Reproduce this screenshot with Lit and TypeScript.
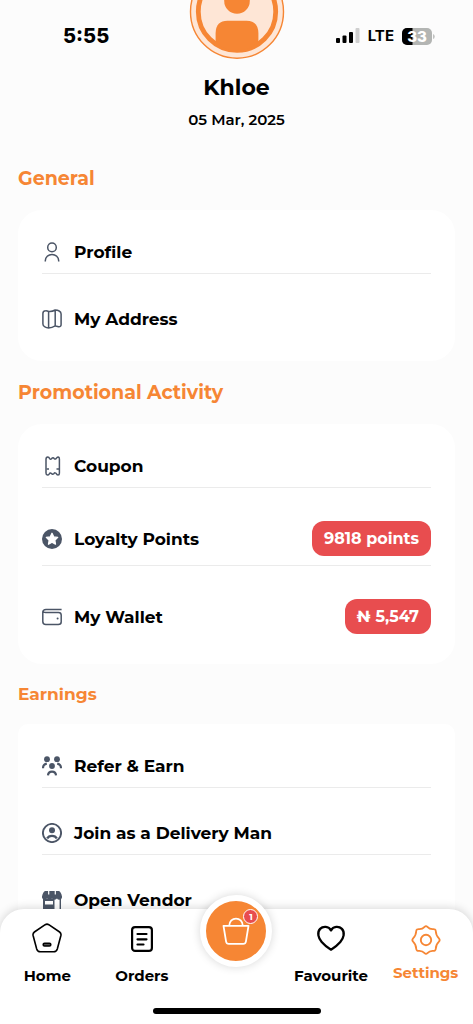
import { LitElement, html, css, svg, nothing } from "lit";
import type { TemplateResult } from "lit";
import { customElement, property } from "lit/decorators.js";
import { classMap } from "lit/directives/class-map.js";

const icon = (body: unknown, size = 20) =>
  html`<svg width=${size} height=${size} viewBox="0 0 ${size} ${size}" fill="none" aria-hidden="true">${body}</svg>`;

const rowIcons: Record<string, TemplateResult> = {
  profile: icon(svg`
    <circle cx="10" cy="5.4" r="4.3" stroke="currentColor" stroke-width="1.5"/>
    <path d="M3.3 19.6v-.9a6.7 6.3 0 0 1 13.4 0v.9" stroke="currentColor" stroke-width="1.5"/>`),
  map: icon(svg`
    <path d="M.9 4.6Q.9 1.8 3.6 1.7Q5.2 1.6 6.6 2.5Q10 2.9 13.2 1Q15.6 1 17.2 2Q19.1 2.9 19.1 5V15.4Q19.1 18 16.5 17.7Q14.5 17 13.2 16.9Q10 18.9 6.6 18.9Q4.5 18.9 2.9 17.9Q.9 17 .9 15ZM6.6 2.5V18.9M13.2 1V16.9" stroke="currentColor" stroke-width="1.5" stroke-linejoin="round"/>`),
  coupon: icon(svg`
    <path d="M4 3.2Q4 .9 5.8 .9Q7 .9 7.3 2.2Q8.3 4 9.8 2.4Q11 1.2 12.2 2.6Q13.5 3.8 14.7 1.8Q15.3 .9 16.3 .9Q17.4 1.1 17.4 3V17.2Q17.4 19.1 16 19.1Q14.8 19.1 14.4 17.8Q13 16 11.8 17.7Q10.6 18.9 9.5 17.6Q8 16.1 7.1 18.1Q6.6 19.1 5.5 19.1Q4 19 4 17Z" stroke="currentColor" stroke-width="1.5" stroke-linejoin="round"/>
    <path d="M4.5 13H7M14.5 13H17" stroke="currentColor" stroke-width="1.4"/>`),
  star: icon(svg`
    <circle cx="10" cy="10" r="10" fill="currentColor"/>
    <path d="m10 4.3 1.7 3.6 4 .5-2.9 2.8.7 4-3.5-1.9-3.5 1.9.7-4-2.9-2.8 4-.5Z" fill="#fff" stroke="#fff" stroke-width="1.3" stroke-linejoin="round"/>`),
  wallet: icon(svg`
    <path d="M19.6 2.6H4Q.8 2.6 .8 5.2V14.5Q.8 17.5 3.8 17.5H16.2Q19.2 17.5 19.2 15V8Q19.2 5.4 16.5 5.4H3.5Q1 5.4 .9 4.6" stroke="currentColor" stroke-width="1.5"/>
    <circle cx="15.6" cy="11.5" r="1" fill="currentColor"/>`),
  group: icon(svg`
    <g fill="currentColor"><circle cx="5" cy="3.2" r="2.9"/><circle cx="15" cy="3.2" r="2.9"/><circle cx="10" cy="10" r="2.9"/></g>
    <path d="M1 12.2Q1 8.3 4.8 7.7M19 12.2Q19 8.3 15.2 7.7M6 19.4Q6.2 15.6 10 15.6T14 19.4" stroke="currentColor" stroke-width="2.2"/>`),
  account: icon(svg`
    <circle cx="10" cy="10" r="9.1" stroke="currentColor" stroke-width="1.9"/>
    <circle cx="10" cy="7.2" r="3" fill="currentColor"/>
    <path d="M5.2 15.6Q6.5 12.9 10 12.9T14.8 15.6" stroke="currentColor" stroke-width="2.4"/>`),
  store: icon(svg`
    <path d="M3.2 1H16.8Q19 1.5 20 6.5V7.5Q19.5 9.8 17.5 9.8Q15.6 9.8 15 8.5Q13.5 9.8 12.3 9.8Q10.8 9.8 10 8.5Q9.2 9.8 7.7 9.8Q6.4 9.8 5 8.5Q4.2 9.8 2.4 9.8Q.4 9.5 0 7.5V6.5Q1 1.5 3.2 1Z" fill="currentColor"/>
    <path d="M6.7 1V4.5M13.3 1V4.5" stroke="#fff" stroke-width="1.2"/>
    <path d="M1 9H12.5V20H1ZM17.6 9H19V20H17.6Z" fill="currentColor"/>
    <path d="M3 11H11V14.5H3Z" fill="#fff"/>`),
};

const navIcons: Record<string, TemplateResult> = {
  home: icon(svg`
    <path d="M13.2 1.7Q15 .6 16.8 1.7L27.6 9Q29.4 10.3 28.9 12.5L25.3 25.9Q24.4 28.7 21.6 28.7H8.4Q5.6 28.7 4.7 25.9L1.1 12.5Q.6 10.3 2.4 9Z" stroke="currentColor" stroke-width="1.6"/>
    <rect x="11.2" y="20.3" width="7.6" height="2.7" rx="1.35" stroke="currentColor" stroke-width="1.6" fill="#555"/>`, 30),
  orders: icon(svg`
    <rect x="5.1" y="4.1" width="19.8" height="23.8" rx="3" stroke="currentColor" stroke-width="2.2"/>
    <path d="M10.5 11H19.5M10.5 16.3H19.5M10.5 21.5H16.5" stroke="currentColor" stroke-width="2.2" stroke-linecap="round"/>`, 30),
  heart: icon(svg`
    <path d="M15 7.4C12.8 3.1 7 2.9 4.1 5.9C.8 9.5 2.3 15.2 5.7 19C8.4 22.1 11.8 24.9 15 26.7C18.2 24.9 21.6 22.1 24.3 19C27.7 15.2 29.2 9.5 25.9 5.9C23 2.9 17.2 3.1 15 7.4Z" stroke="currentColor" stroke-width="2.3" stroke-linejoin="round"/>`, 30),
  gear: icon(svg`
    <path d="M13.6 1.9Q15 .5 16.4 1.9C18.2 3.9 19.1 4.3 21.8 4.2Q24.7 4 24.8 6.2C24.9 9.8 25.3 10.8 27.9 13.3Q29.4 15 27.9 16.7C25.3 19.2 24.9 20.2 24.8 23.8Q24.7 26 21.8 25.8C19.1 25.7 18.2 26.1 16.4 28.1Q15 29.5 13.6 28.1C11.8 26.1 10.9 25.7 8.2 25.8Q5.3 26 5.2 23.8C5.1 20.2 4.7 19.2 2.1 16.7Q.6 15 2.1 13.3C4.7 10.8 5.1 9.8 5.2 6.2Q5.3 4 8.2 4.2C10.9 4.3 11.8 3.9 13.6 1.9Z" stroke="currentColor" stroke-width="1.8"/>
    <circle cx="15" cy="15" r="5.2" stroke="currentColor" stroke-width="1.9"/>`, 30),
};

interface Row {
  icon: string;
  label: string;
  badge?: string;
}

@customElement("settings-group")
class SettingsGroup extends LitElement {
  @property() heading = "";
  @property({ attribute: false }) rows: Row[] = [];
  @property({ type: Boolean, reflect: true }) compact = false;

  static styles = css`
    :host { display: block; }
    .heading { margin: 0; padding: 20px 0; font-size: 19px; line-height: 23px; font-weight: 700; color: #f68634; }
    .card { list-style: none; margin: 0; padding: 20px 24px; background: #fff; border-radius: 24px; display: flex; flex-direction: column; gap: 23px; }
    :host([compact]) .heading { font-size: 17px; line-height: 20px; }
    :host([compact]) .card { border-radius: 10px; }
    .item { padding: 10px 0 9px; border-bottom: 1px solid #ebebeb; }
    .item:last-child { padding-bottom: 10px; border-bottom: 0; }
    .row { display: flex; align-items: center; gap: 12px; min-height: 24px; color: #000; text-decoration: none; font-size: 17px; line-height: 24px; font-weight: 700; }
    .glyph { display: flex; color: #4b5566; }
    .label { flex: 1; }
    .badge { padding: 0 12px; line-height: 35px; font-size: 16px; color: #fff; background: #e84d4f; border-radius: 12px; }
  `;

  render() {
    return html`
      <h2 class="heading">${this.heading}</h2>
      <ul class="card">
        ${this.rows.map(
          (row) => html`<li class="item">
            <a class="row" href="#">
              <span class="glyph">${rowIcons[row.icon]}</span>
              <span class="label">${row.label}</span>
              ${row.badge ? html`<span class="badge">${row.badge}</span>` : nothing}
            </a>
          </li>`
        )}
      </ul>
    `;
  }
}

@customElement("tab-bar")
class TabBar extends LitElement {
  static styles = css`
    :host { display: block; }
    .bar { background: #fff; border-radius: 24px 24px 0 0; box-shadow: 0 -1px 10px rgba(0, 0, 0, 0.16); }
    .tabs { display: grid; grid-template-columns: repeat(5, 1fr); height: 99px; padding-top: 14px; box-sizing: border-box; }
    .tab { display: flex; flex-direction: column; align-items: center; gap: 13px; color: #000; text-decoration: none; font-size: 15px; line-height: 20px; font-weight: 700; }
    .tab svg { display: block; }
    .active { color: #f68634; gap: 8px; padding-top: 2px; }
    .cart { position: relative; justify-self: center; width: 72px; height: 72px; margin-top: -28px; padding: 0; border: 6px solid #fff; border-radius: 50%; background: #f68634; box-shadow: 0 0 10px rgba(0, 0, 0, 0.16); }
    .cart svg { display: block; margin: auto; }
    .count { position: absolute; top: 8px; right: 8px; width: 15px; height: 15px; box-sizing: border-box; border: 1px solid #fff; border-radius: 50%; background: #e84d4f; color: #fff; font: 700 9px/13px Montserrat, Inter, sans-serif; text-align: center; }
    .indicator { width: 168px; height: 6px; margin: 0 auto; border-radius: 3px; background: #000; }
    .foot { padding-bottom: 10px; }
  `;

  private tab(glyph: string, label: string, active = false) {
    return html`<a class=${classMap({ tab: true, active })} href="#">${navIcons[glyph]}<span>${label}</span></a>`;
  }

  render() {
    return html`
      <div class="bar">
        <nav class="tabs">
          ${this.tab("home", "Home")} ${this.tab("orders", "Orders")}
          <button class="cart" aria-label="Cart">
            <svg width="28" height="28" viewBox="0 0 28 28" fill="none" aria-hidden="true">
              <path d="M1.5 8.8H26.5L23.9 24.6Q23.5 26.9 21.2 26.9H6.8Q4.5 26.9 4.1 24.6ZM7.2 8.8C7.3 -.9 20.7 -.9 20.8 8.8" stroke="#fff" stroke-width="1.8" stroke-linejoin="round"/>
            </svg>
            <span class="count">1</span>
          </button>
          ${this.tab("heart", "Favourite")} ${this.tab("gear", "Settings", true)}
        </nav>
        <div class="foot"><div class="indicator"></div></div>
      </div>
    `;
  }
}

@customElement("app-root")
class AppRoot extends LitElement {
  static styles = css`
    :host { display: block; position: relative; height: 100vh; overflow: hidden; background: #fcfcfc; color: #000; font-family: Montserrat, Inter, sans-serif; }
    .status { position: absolute; inset: 24px 38px auto 63px; display: flex; justify-content: space-between; align-items: center; height: 24px; font-family: Inter, sans-serif; }
    .time { font-size: 20px; line-height: 24px; font-weight: 800; }
    .signals { display: flex; align-items: center; gap: 8px; font-size: 15px; line-height: 24px; font-weight: 700; }
    .signals svg { display: block; }
    .header { display: flex; flex-direction: column; align-items: center; padding-bottom: 17px; }
    .header svg { display: block; }
    .name { margin: 15px 0 8px; font-size: 22px; line-height: 28px; font-weight: 700; }
    .date { margin: 0; font-size: 15px; line-height: 20px; font-weight: 600; }
    .groups { padding: 0 18px; }
    .dock { position: absolute; inset: auto 0 0; }
    .battery-text { font: 800 15px Inter, sans-serif; }
  `;

  render() {
    return html`
      <header class="header">
        <svg width="96" height="59" viewBox="0 0 96 59" fill="none" role="img" aria-label="Profile picture">
          <circle cx="48" cy="11.7" r="46.5" fill="#fee6d6" stroke="#f68634" stroke-width="1.4"/>
          <circle cx="48" cy="11.7" r="38.7" stroke="#f68634" stroke-width="4.8"/>
          <circle cx="48" cy=".9" r="12.8" fill="#f68634"/>
          <path d="M26.6 42V33Q27 20.8 38.5 20.8H57.5Q69 20.8 69.4 33V42Q60 51 48 51T26.6 42Z" fill="#f68634"/>
        </svg>
        <h1 class="name">Khloe</h1>
        <p class="date">05 Mar, 2025</p>
      </header>
      <main class="groups">
        <settings-group
          heading="General"
          .rows=${[
            { icon: "profile", label: "Profile" },
            { icon: "map", label: "My Address" },
          ]}
        ></settings-group>
        <settings-group
          heading="Promotional Activity"
          .rows=${[
            { icon: "coupon", label: "Coupon" },
            { icon: "star", label: "Loyalty Points", badge: "9818 points" },
            { icon: "wallet", label: "My Wallet", badge: "₦ 5,547" },
          ]}
        ></settings-group>
        <settings-group
          compact
          heading="Earnings"
          .rows=${[
            { icon: "group", label: "Refer & Earn" },
            { icon: "account", label: "Join as a Delivery Man" },
            { icon: "store", label: "Open Vendor" },
          ]}
        ></settings-group>
      </main>
      <div class="status">
        <span class="time">5:55</span>
        <span class="signals">
          <svg width="24" height="16" viewBox="0 0 24 16" aria-hidden="true">
            <rect x="0" y="10" width="4" height="5" rx="1"/>
            <rect x="6.5" y="7.5" width="4" height="7.5" rx="1"/>
            <rect x="13" y="4" width="4" height="11" rx="1"/>
            <rect x="19.5" y="0" width="4" height="15" rx="1" fill="#cfcfcf"/>
          </svg>
          <span>LTE</span>
          <svg width="33" height="17" viewBox="0 0 33 17" role="img" aria-label="Battery 33%">
            <clipPath id="charge"><rect width="10.5" height="17"/></clipPath>
            <rect width="30" height="17" rx="5" fill="#b3b5b3"/>
            <rect width="30" height="17" rx="5" clip-path="url(#charge)"/>
            <path d="M31.2 6Q32.6 6.5 32.6 8.5T31.2 11Z" fill="#b3b5b3"/>
            <text class="battery-text" x="15" y="14" text-anchor="middle" fill="#fff">33</text>
          </svg>
        </span>
      </div>
      <tab-bar class="dock"></tab-bar>
    `;
  }
}
